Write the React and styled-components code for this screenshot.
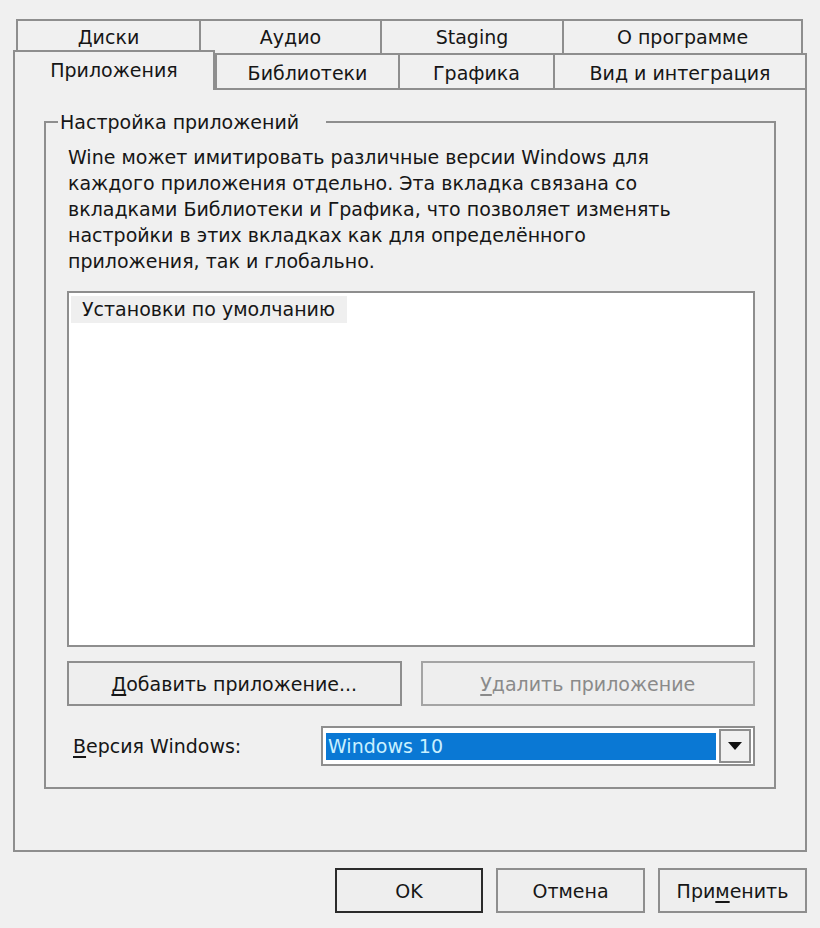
import styled, { createGlobalStyle } from "styled-components";

const GlobalStyle = createGlobalStyle`
  html, body {
    margin: 0;
    padding: 0;
    background: #f0f0f0;
  }
  body {
    font-family: "DejaVu Sans", "Liberation Sans", sans-serif;
    font-size: 19px;
    color: #161616;
  }
`;

const line = "#8e8e8e";

const Window = styled.div`
  width: 820px;
  height: 928px;
  box-sizing: border-box;
  padding: 19px 13px 0 13px;
  display: flex;
  flex-direction: column;
`;

const TabRow = styled.div`
  display: flex;
  align-items: flex-end;
  margin: ${(p) => (p.$back ? "0 4px 0 3px" : "0")};
  height: ${(p) => (p.$back ? "34px" : "37px")};
`;

const Tab = styled.div`
  box-sizing: border-box;
  width: ${(p) => p.$w}px;
  height: ${(p) => (p.$active ? "40px" : "100%")};
  margin-top: ${(p) => (p.$active ? "-3px" : "0")};
  position: relative;
  z-index: ${(p) => (p.$active ? 1 : 0)};
  display: flex;
  align-items: center;
  justify-content: center;
  padding-top: ${(p) => (p.$active || p.$back ? "0" : "2px")};
  padding-bottom: ${(p) => (p.$active ? "2px" : "0")};
  background: #f0f0f0;
  border-top: 2px solid ${line};
  border-left: 2px solid ${line};
  border-right: ${(p) => (p.$last || p.$active ? `2px solid ${line}` : "none")};
  border-bottom: ${(p) => (p.$active || p.$back ? "none" : `2px solid ${line}`)};
  white-space: nowrap;
`;

const Panel = styled.div`
  box-sizing: border-box;
  height: 762px;
  border: 2px solid ${line};
  border-top: none;
  padding: 19px 29px 0 29px;
`;

const Group = styled.fieldset`
  margin: 0;
  min-width: 0;
  border: 2px solid ${line};
  padding: 9px 19px 21px 21px;
`;

const Legend = styled.legend`
  margin-left: -9px;
  padding: 0 27px 0 2px;
  line-height: 26px;
`;

const Description = styled.p`
  margin: 0;
  padding-left: 1px;
  line-height: 26px;
  white-space: nowrap;
`;

const List = styled.div`
  margin-top: 17px;
  height: 356px;
  box-sizing: border-box;
  background: #ffffff;
  border: 2px solid ${line};
  padding: 3px 2px;
`;

const ListItem = styled.div`
  display: inline-block;
  height: 27px;
  line-height: 27px;
  padding: 0 12px 0 11px;
  background: #efefef;
`;

const ButtonRow = styled.div`
  display: flex;
  gap: 19px;
  margin-top: 14px;
`;

const Button = styled.button`
  flex: ${(p) => (p.$w ? "none" : 1)};
  width: ${(p) => (p.$w ? `${p.$w}px` : "auto")};
  height: 45px;
  box-sizing: border-box;
  background: #eeeeee;
  border: 2px solid ${(p) => (p.$default ? "#2b2b2b" : p.disabled ? "#a4a4a4" : line)};
  font: inherit;
  color: ${(p) => (p.disabled ? "#8a8a8a" : "#161616")};
  padding: 0;
  cursor: default;

  u {
    text-decoration-thickness: 2px;
    text-underline-offset: 3px;
  }
`;

const VersionRow = styled.div`
  display: flex;
  align-items: center;
  margin-top: 20px;
`;

const Label = styled.label`
  width: 254px;
  padding-left: 6px;
  box-sizing: border-box;

  u {
    text-decoration-thickness: 2px;
    text-underline-offset: 3px;
  }
`;

const Combo = styled.div`
  flex: 1;
  height: 40px;
  box-sizing: border-box;
  border: 2px solid ${line};
  background: #ffffff;
  display: flex;
  align-items: center;
  padding: 2px 2px 2px 3px;
  gap: 3px;
`;

const Selection = styled.div`
  flex: 1;
  height: 27px;
  background: #0a78d4;
  color: #c9f0ff;
  line-height: 27px;
  padding-left: 2px;
`;

const DropButton = styled.div`
  width: 32px;
  height: 34px;
  box-sizing: border-box;
  border: 2px solid ${line};
  background: #f0f0f0;
  display: flex;
  align-items: center;
  justify-content: center;
`;

const Footer = styled.div`
  display: flex;
  justify-content: flex-end;
  gap: 13px;
  margin-top: 16px;
`;

const Caret = () => (
  <svg width="14" height="8" viewBox="0 0 14 8">
    <path d="M0 0 L14 0 L7 8 Z" fill="#111" />
  </svg>
);

export default function App() {
  return (
    <Window>
      <GlobalStyle />
      <TabRow $back>
        <Tab $back $w={183}>Диски</Tab>
        <Tab $back $w={181}>Аудио</Tab>
        <Tab $back $w={182}>Staging</Tab>
        <Tab $back $last $w={241}>О программе</Tab>
      </TabRow>
      <TabRow>
        <Tab $active $w={202}>Приложения</Tab>
        <Tab $w={183}>Библиотеки</Tab>
        <Tab $w={155}>Графика</Tab>
        <Tab $last $w={254}>Вид и интеграция</Tab>
      </TabRow>
      <Panel>
        <Group>
          <Legend>Настройка приложений</Legend>
          <Description>
            Wine может имитировать различные версии Windows для
            <br />
            каждого приложения отдельно. Эта вкладка связана со
            <br />
            вкладками Библиотеки и Графика, что позволяет изменять
            <br />
            настройки в этих вкладках как для определённого
            <br />
            приложения, так и глобально.
          </Description>
          <List>
            <ListItem>Установки по умолчанию</ListItem>
          </List>
          <ButtonRow>
            <Button>
              <u>Д</u>обавить приложение...
            </Button>
            <Button disabled>
              <u>У</u>далить приложение
            </Button>
          </ButtonRow>
          <VersionRow>
            <Label>
              <u>В</u>ерсия Windows:
            </Label>
            <Combo>
              <Selection>Windows 10</Selection>
              <DropButton>
                <Caret />
              </DropButton>
            </Combo>
          </VersionRow>
        </Group>
      </Panel>
      <Footer>
        <Button $default $w={148}>OK</Button>
        <Button $w={149}>Отмена</Button>
        <Button $w={149}>
          При<u>м</u>енить
        </Button>
      </Footer>
    </Window>
  );
}
